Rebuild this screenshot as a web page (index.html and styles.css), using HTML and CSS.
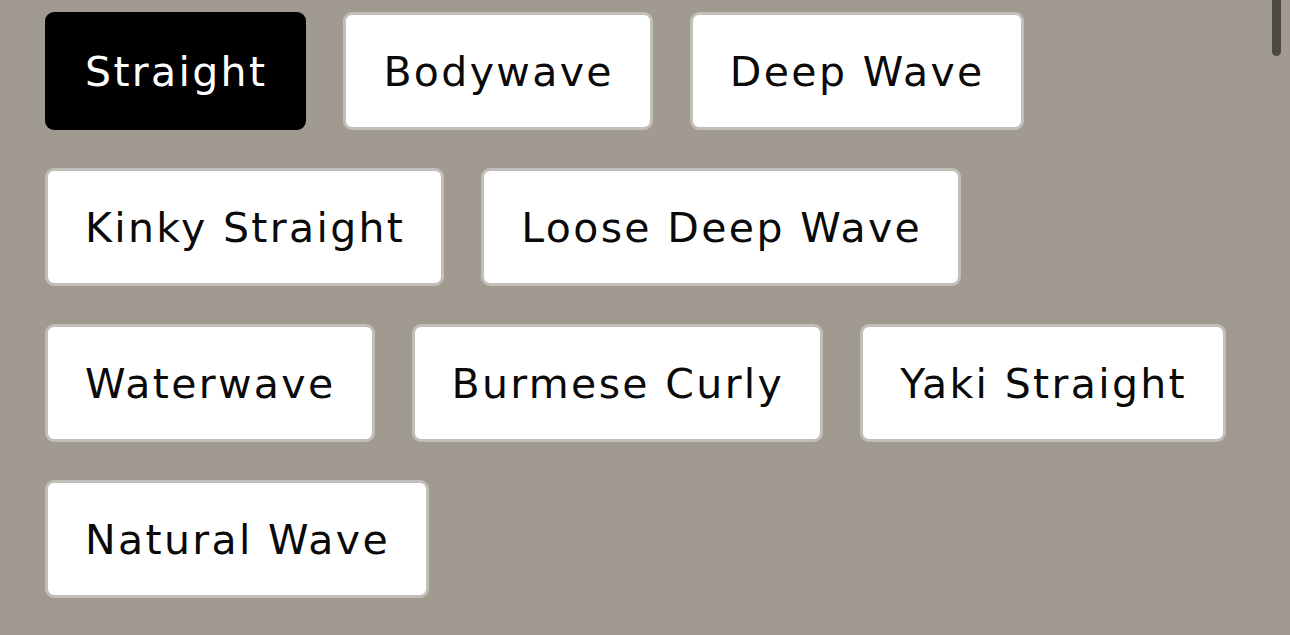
FILE: index.html
```html
<!DOCTYPE html>
<html lang="en">
<head>
<meta charset="utf-8">
<title>Texture options</title>
<link rel="stylesheet" href="styles.css">
</head>
<body>
<div class="options">
  <button class="opt opt-active">Straight</button>
  <button class="opt">Bodywave</button>
  <button class="opt">Deep Wave</button>
  <button class="opt">Kinky Straight</button>
  <button class="opt">Loose Deep Wave</button>
  <button class="opt">Waterwave</button>
  <button class="opt">Burmese Curly</button>
  <button class="opt">Yaki Straight</button>
  <button class="opt">Natural Wave</button>
</div>
<div class="scroll-thumb"></div>
</body>
</html>
```
FILE: styles.css
```css
html, body {
  margin: 0;
  padding: 0;
  background: #a19a90;
  height: 100%;
  overflow: hidden;
}
.options {
  display: flex;
  flex-wrap: wrap;
  gap: 38px 37px;
  padding: 12px 45px 0 45px;
}
.opt {
  box-sizing: border-box;
  height: 118px;
  padding: 2px 36px 0 37px;
  display: flex;
  align-items: center;
  background: #ffffff;
  border: 3px solid #c2beb9;
  border-radius: 9px;
  font-family: "DejaVu Sans", sans-serif;
  font-size: 41px;
  letter-spacing: 2.35px;
  color: #0a0a0a;
  line-height: 1;
  white-space: nowrap;
}
.opt-active {
  background: #000000;
  border-color: #000000;
  color: #ffffff;
}
.scroll-thumb {
  position: absolute;
  top: 0;
  left: 1272px;
  width: 9px;
  height: 56px;
  background: #4d4a44;
  border-radius: 0 0 5px 5px;
}
```
